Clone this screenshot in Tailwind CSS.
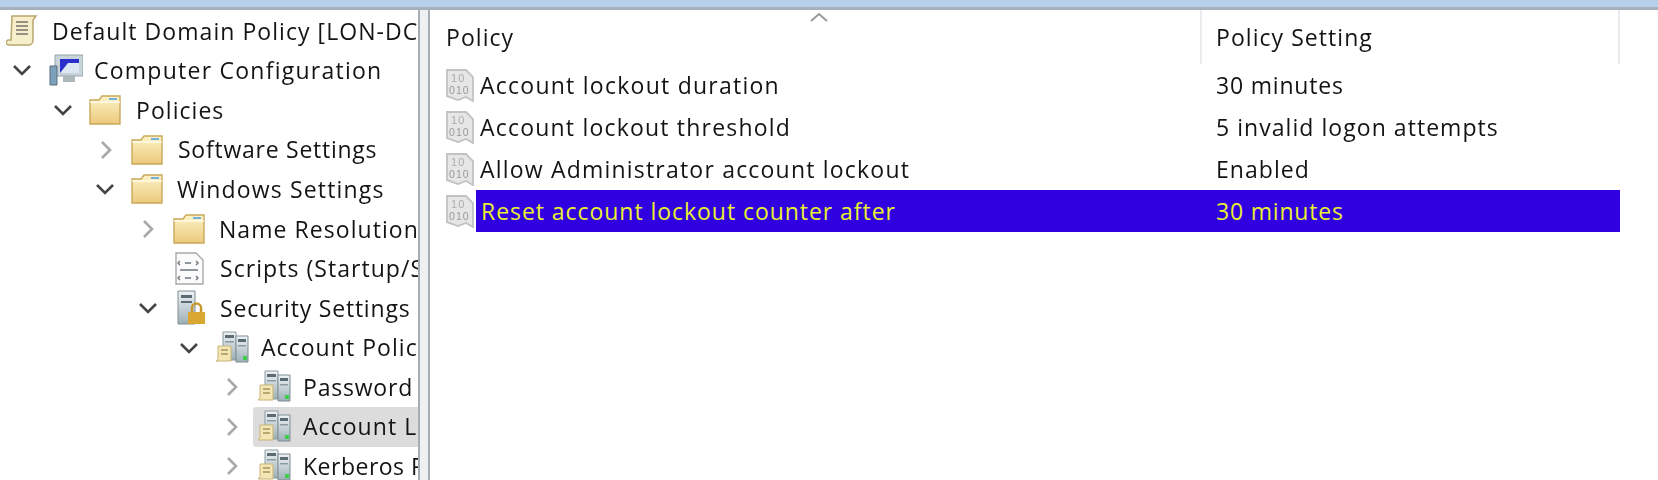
<!DOCTYPE html>
<html lang="en">
<head>
  <meta charset="UTF-8">
  <title>Group Policy Management Editor</title>
  <script src="https://cdn.jsdelivr.net/npm/@tailwindcss/browser@4"></script>
</head>
<body class="bg-white overflow-hidden font-['Open_Sans','Noto_Sans',sans-serif] text-[23px] tracking-[1.05px] text-[#141414]">
  <svg class="absolute w-0 h-0">
    <defs>
      <linearGradient id="fold" x1="0" y1="0" x2="0" y2="1"><stop offset="0" stop-color="#fdf3c8"/><stop offset="1" stop-color="#ecc97c"/></linearGradient>
      <linearGradient id="srv" x1="0" y1="0" x2="0" y2="1"><stop offset="0" stop-color="#eef2f4"/><stop offset="1" stop-color="#9db0b7"/></linearGradient>
      <symbol id="down" viewBox="0 0 20 12"><path d="M2 2l8 8 8-8" fill="none" stroke="#444" stroke-width="2.6"/></symbol>
      <symbol id="right" viewBox="0 0 12 20"><path d="M2 2l8 8-8 8" fill="none" stroke="#a9a9a9" stroke-width="2.6"/></symbol>
      <symbol id="folder" viewBox="0 0 32 30">
        <path d="M1 29V5h9l3-4h18v28z" fill="url(#fold)" stroke="#c9a85a" stroke-width="1.4"/>
        <path d="M1 7h30" stroke="#fffbe6" stroke-width="1.500"/>
        <path d="M20 3h8v2h-8z" fill="#6fb2e0"/>
      </symbol>
      <symbol id="servers" viewBox="0 0 34 34">
        <path d="M8 1h13v28H8z" fill="url(#srv)" stroke="#8b9a9f"/>
        <path d="M21 5h12v26H21z" fill="url(#srv)" stroke="#7c8d92"/>
        <path d="M10 4h9v3h-9zM23 8h8v3h-8z" fill="#5a6b71"/>
        <path d="M10 10h9v1.500h-9zM23 14h8v1.500h-8z" fill="#8b9a9f"/>
        <path d="M28 25h4v4h-4z" fill="#3fce4b"/>
        <path d="M3 15h13v15H1l2-2z" fill="#f4e6b4" stroke="#c8b377"/>
        <path d="M6 19h7M6 23h7" stroke="#a8925a" stroke-width="1.500"/>
      </symbol>
      <symbol id="bin" viewBox="0 0 28 33">
        <path d="M1 1h19l7 7v24l-7-4-8 3-11-4z" fill="#e6e6e6" stroke="#c2c2c2" stroke-width="1.800"/>
        <text x="5" y="13" font-family="Liberation Sans" font-size="11" fill="#adadad">10</text>
        <text x="3" y="25" font-family="Liberation Sans" font-size="10.500" fill="#9a9a9a">010</text>
      </symbol>
    </defs>
  </svg>

  <div class="blur-[0.5px]">
  <div class="h-[7px] bg-[#b5d0e8]"></div>
  <div class="h-[3px] bg-[#a4b0bc]"></div>

  <div class="flex h-[470px]">
    <!-- tree -->
    <div class="w-[418px] shrink-0 overflow-hidden pt-[1px]">
      <div class="flex items-center h-[39.6px] pl-[6px] whitespace-nowrap">
        <svg class="w-[32px] h-[33px] mr-[14px] shrink-0" viewBox="0 0 32 33">
          <path d="M6 2h24l-3 4v20c0 3-2 5-4 5H3c-2 0-3-1-3-3l2-2h3z" fill="#f7eecb" stroke="#b8a66f" stroke-width="1.500"/>
          <path d="M10 8h12M10 12h12M10 16h12M10 20h12" stroke="#77736a" stroke-width="1.500"/>
        </svg>
        Default Domain Policy [LON-DC1]
      </div>
      <div class="flex items-center h-[39.6px] pl-[12px] whitespace-nowrap tracking-[1.25px]">
        <svg class="w-[20px] h-[12px] mr-[15px] shrink-0"><use href="#down"/></svg>
        <svg class="w-[36px] h-[32px] mr-[11px] shrink-0" viewBox="0 0 36 32">
          <path d="M8 1h28v21H8z" fill="#c9d3da" stroke="#95a1a8"/>
          <path d="M13 5h19v14H13z" fill="#2a2fc9"/>
          <path d="M13 19l8-10h11v10z" fill="#dbe6f2"/>
          <path d="M16 22h12v6H16z" fill="#aeb8bc"/>
          <path d="M3 12h7v19H3z" fill="#7ea1bb" stroke="#596f7e"/>
        </svg>
        Computer Configuration
      </div>
      <div class="flex items-center h-[39.6px] pl-[53px] whitespace-nowrap">
        <svg class="w-[20px] h-[12px] mr-[16px] shrink-0"><use href="#down"/></svg>
        <svg class="w-[32px] h-[30px] mr-[15px] shrink-0"><use href="#folder"/></svg>
        Policies
      </div>
      <div class="flex items-center h-[39.6px] pl-[100px] whitespace-nowrap tracking-[0.75px]">
        <svg class="w-[12px] h-[20px] mr-[19px] shrink-0"><use href="#right"/></svg>
        <svg class="w-[32px] h-[30px] mr-[15px] shrink-0"><use href="#folder"/></svg>
        Software Settings
      </div>
      <div class="flex items-center h-[39.6px] pl-[95px] whitespace-nowrap tracking-[1.15px]">
        <svg class="w-[20px] h-[12px] mr-[16px] shrink-0"><use href="#down"/></svg>
        <svg class="w-[32px] h-[30px] mr-[14px] shrink-0"><use href="#folder"/></svg>
        Windows Settings
      </div>
      <div class="flex items-center h-[39.6px] pl-[142px] whitespace-nowrap">
        <svg class="w-[12px] h-[20px] mr-[19px] shrink-0"><use href="#right"/></svg>
        <svg class="w-[32px] h-[30px] mr-[14px] shrink-0"><use href="#folder"/></svg>
        Name Resolution Policy
      </div>
      <div class="flex items-center h-[39.6px] pl-[175px] whitespace-nowrap">
        <svg class="w-[29px] h-[33px] mr-[16px] shrink-0" viewBox="0 0 29 33">
          <path d="M1 1h20l7 7v24H1z" fill="#fbfbfb" stroke="#a9a9a9" stroke-width="1.400"/>
          <path d="M5 9l-2 2 2 2M10 11h6M21 9l2 2-2 2M5 24l-2 2 2 2M10 26h6M21 24l2 2-2 2M5 18h18" fill="none" stroke="#6d7780" stroke-width="1.400"/>
        </svg>
        Scripts (Startup/Shutdown)
      </div>
      <div class="flex items-center h-[39.6px] pl-[138px] whitespace-nowrap tracking-[0.8px]">
        <svg class="w-[20px] h-[12px] mr-[19px] shrink-0"><use href="#down"/></svg>
        <svg class="w-[29px] h-[35px] mr-[14px] shrink-0" viewBox="0 0 29 35">
          <path d="M1 1h17v33H1z" fill="url(#srv)" stroke="#7e8e94"/>
          <path d="M4 5h11v3H4zM4 11h11v2H4z" fill="#5a6b71"/>
          <path d="M11 22h17v12H11z" fill="#d9a832"/>
          <path d="M15 22v-4a4.500 4.500 0 0 1 9 0v4" fill="none" stroke="#c79a2f" stroke-width="2.500"/>
        </svg>
        Security Settings
      </div>
      <div class="flex items-center h-[39.6px] pl-[179px] whitespace-nowrap">
        <svg class="w-[20px] h-[12px] mr-[16px] shrink-0"><use href="#down"/></svg>
        <svg class="w-[34px] h-[34px] mr-[12px] shrink-0"><use href="#servers"/></svg>
        Account Policies
      </div>
      <div class="flex items-center h-[39.6px] pl-[226px] whitespace-nowrap tracking-[0.8px]">
        <svg class="w-[12px] h-[20px] mr-[19px] shrink-0"><use href="#right"/></svg>
        <svg class="w-[34px] h-[34px] mr-[12px] shrink-0"><use href="#servers"/></svg>
        Password Policy
      </div>
      <div class="flex items-center h-[39.6px] pl-[226px] whitespace-nowrap">
        <svg class="w-[12px] h-[20px] mr-[15px] shrink-0"><use href="#right"/></svg>
        <div class="flex items-center flex-1 h-full bg-[#dcdcdc] rounded-l-[3px] pl-[4px]">
          <svg class="w-[34px] h-[34px] mr-[12px] shrink-0"><use href="#servers"/></svg>
          Account Lockout Policy
        </div>
      </div>
      <div class="flex items-center h-[39.6px] pl-[226px] whitespace-nowrap tracking-[0.5px]">
        <svg class="w-[12px] h-[20px] mr-[19px] shrink-0"><use href="#right"/></svg>
        <svg class="w-[34px] h-[34px] mr-[12px] shrink-0"><use href="#servers"/></svg>
        Kerberos Policy
      </div>
    </div>

    <!-- splitter -->
    <div class="w-[12px] shrink-0 bg-[#f0f0f0] border-x-2 border-[#a6aeb5]"></div>

    <!-- list -->
    <div class="relative flex-1 pl-[16px] overflow-hidden">
      <svg class="absolute left-[380px] top-[2px] w-[18px] h-[10px]" viewBox="0 0 18 10"><path d="M1 9l8-7 8 7" fill="none" stroke="#9a9a9a" stroke-width="2"/></svg>
      <div class="flex h-[54px] items-center">
        <div class="w-[754px] pt-[1px]">Policy</div>
        <div class="w-[420px] h-full pl-[14px] flex items-center border-x-2 border-[#e9ecee]">Policy Setting</div>
      </div>
      <div class="flex items-center h-[42px] whitespace-nowrap">
        <svg class="w-[28px] h-[33px] shrink-0 mr-[6px]"><use href="#bin"/></svg>
        <span class="w-[720px] tracking-[1.25px]">Account lockout duration</span>
        <span class="pl-[16px] tracking-[0.8px]">30 minutes</span>
      </div>
      <div class="flex items-center h-[42px] whitespace-nowrap">
        <svg class="w-[28px] h-[33px] shrink-0 mr-[6px]"><use href="#bin"/></svg>
        <span class="w-[720px] tracking-[1.2px]">Account lockout threshold</span>
        <span class="pl-[16px]">5 invalid logon attempts</span>
      </div>
      <div class="flex items-center h-[42px] whitespace-nowrap">
        <svg class="w-[28px] h-[33px] shrink-0 mr-[6px]"><use href="#bin"/></svg>
        <span class="w-[720px] tracking-[1.2px]">Allow Administrator account lockout</span>
        <span class="pl-[16px]">Enabled</span>
      </div>
      <div class="flex items-center h-[42px] whitespace-nowrap">
        <svg class="w-[28px] h-[33px] shrink-0 mr-[2px]"><use href="#bin"/></svg>
        <div class="flex items-center w-[1144px] h-full bg-[#3100e0] text-[#e8f030] pl-[5px]">
          <span class="w-[719px] tracking-[0.95px]">Reset account lockout counter after</span>
          <span class="pl-[16px] tracking-[0.8px]">30 minutes</span>
        </div>
      </div>
    </div>
  </div>
  </div>
</body>
</html>
